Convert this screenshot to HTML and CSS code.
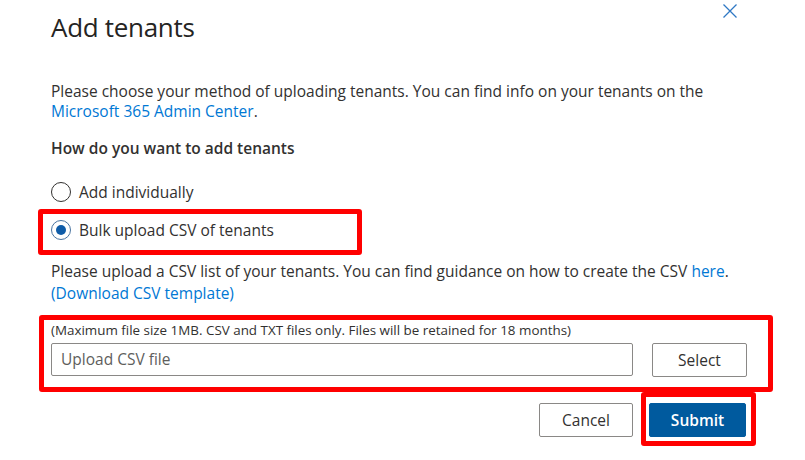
FILE: index.html
```html
<!DOCTYPE html>
<html lang="en">
<head>
<meta charset="utf-8">
<title>Add tenants</title>
<link rel="stylesheet" href="styles.css">
</head>
<body>
<div class="dialog">
  <div class="header">
    <h1 class="title">Add tenants</h1>
    <button class="close" aria-label="Close">
      <svg width="14" height="14" viewBox="0 0 14 14"><path d="M0.5 0.5 L13.5 13.5 M13.5 0.5 L0.5 13.5" stroke="#2f78c4" stroke-width="1.3" fill="none"/></svg>
    </button>
  </div>
  <p class="intro">Please choose your method of uploading tenants. You can find info on your tenants on the <a href="#" class="link">Microsoft 365 Admin Center</a>.</p>
  <div class="label">How do you want to add tenants</div>
  <div class="radio-row first">
    <span class="radio"></span><span class="radio-text">Add individually</span>
  </div>
  <div class="highlight box-radio">
    <div class="radio-row">
      <span class="radio checked"></span><span class="radio-text">Bulk upload CSV of tenants</span>
    </div>
  </div>
  <p class="guide">Please upload a CSV list of your tenants. You can find guidance on how to create the CSV <a href="#" class="link">here</a>.<br><a href="#" class="link">(Download CSV template)</a></p>
  <div class="highlight box-upload">
    <div class="hint">(Maximum file size 1MB. CSV and TXT files only. Files will be retained for 18 months)</div>
    <div class="upload-row">
      <div class="input">Upload CSV file</div>
      <button class="btn">Select</button>
    </div>
  </div>
  <div class="footer">
    <button class="btn cancel">Cancel</button>
    <div class="highlight box-submit">
      <button class="btn primary">Submit</button>
    </div>
  </div>
</div>
</body>
</html>
```
FILE: styles.css
```css
* { box-sizing: border-box; }
body {
  margin: 0;
  background: #ffffff;
  font-family: "Open Sans", "Noto Sans", sans-serif;
  color: #323130;
  font-size: 15.5px;
  width: 805px;
  height: 460px;
  overflow: hidden;
}
.dialog { padding: 0; }
.header {
  display: flex;
  justify-content: space-between;
  align-items: flex-start;
  padding: 4px 68px 0 51px;
}
.title {
  margin: 7px 0 0 0;
  font-size: 26px;
  line-height: 32px;
  font-weight: 400;
  color: #252423;
  letter-spacing: -0.3px;
}
.close {
  border: 0;
  background: none;
  padding: 0;
  width: 14px;
  height: 14px;
  display: block;
}
.close svg { display: block; }
.intro {
  margin: 38px 0 0 51px;
  width: 690px;
  line-height: 20px;
}
.link { color: #0078d4; text-decoration: none; }
.label {
  margin: 17px 0 0 51px;
  line-height: 20px;
  font-weight: 600;
}
.radio-row {
  display: flex;
  align-items: center;
  gap: 8px;
  height: 20px;
  line-height: 20px;
}
.radio-row.first { margin: 24px 0 0 51px; }
.radio {
  width: 20px;
  height: 20px;
  border: 1px solid #323130;
  border-radius: 50%;
  display: flex;
  align-items: center;
  justify-content: center;
  flex: none;
}
.radio.checked { border-color: #4a74a0; }
.radio.checked::after {
  content: "";
  width: 10px;
  height: 10px;
  border-radius: 50%;
  background: #0f5ca8;
}
.highlight {
  border: 5px solid #ff0000;
  border-radius: 3px;
}
.box-radio {
  margin: 7px 0 0 38px;
  width: 324px;
  padding: 6px 8px 10px 8px;
}
.guide {
  margin: 5px 0 0 51px;
  line-height: 22px;
}
.box-upload {
  margin: 11px 32px 0 39px;
  padding: 2px 21px 10px 7px;
}
.hint {
  font-size: 13.4px;
  line-height: 16px;
  color: #323130;
}
.upload-row {
  display: flex;
  align-items: flex-start;
  gap: 19px;
  margin-top: 5px;
}
.input {
  width: 582px;
  height: 33px;
  border: 1px solid #8a8886;
  border-radius: 2px;
  padding-left: 9px;
  line-height: 31px;
  color: #605e5c;
}
.btn {
  font-family: "Open Sans", "Noto Sans", sans-serif;
  font-size: 15.5px;
  color: #323130;
  background: #ffffff;
  border: 1px solid #8a8886;
  border-radius: 2px;
  height: 34px;
  width: 95px;
  padding: 0;
}
.footer {
  display: flex;
  justify-content: flex-end;
  align-items: center;
  gap: 8px;
  padding-right: 49px;
}
.cancel { width: 94px; margin-top: 2px; }
.box-submit {
  padding: 6px 5px 4px 3px;
}
.primary {
  width: 97px;
  background: #005a9e;
  border-color: #005a9e;
  color: #ffffff;
  font-weight: 600;
  display: block;
}
```
